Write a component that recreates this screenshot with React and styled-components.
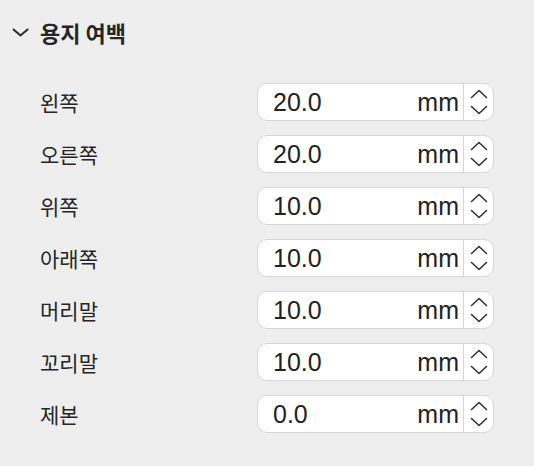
import React from "react";
import styled, { createGlobalStyle } from "styled-components";

const margins = [
  { label: "왼쪽", value: "20.0" },
  { label: "오른쪽", value: "20.0" },
  { label: "위쪽", value: "10.0" },
  { label: "아래쪽", value: "10.0" },
  { label: "머리말", value: "10.0" },
  { label: "꼬리말", value: "10.0" },
  { label: "제본", value: "0.0" },
];

const GlobalStyle = createGlobalStyle`
  html, body {
    margin: 0;
    background: #eeeeee;
  }
  body {
    font-family: "Noto Sans CJK KR", "Noto Sans", sans-serif;
    color: #222222;
  }
`;

const Chevron = ({ up }) => (
  <svg width="18" height="10" viewBox="0 0 18 10" fill="none">
    <path
      d={up ? "M1.5 8.5 L9 1.5 L16.5 8.5" : "M1.5 1.5 L9 8.5 L16.5 1.5"}
      stroke="#333"
      strokeWidth="1.6"
      strokeLinecap="round"
      strokeLinejoin="round"
    />
  </svg>
);

const App = () => {
  return (
    <Panel>
      <GlobalStyle />
      <Header>
        <svg width="17" height="9" viewBox="0 0 17 9" fill="none">
          <path
            d="M1.5 1.5 L8.5 7.5 L15.5 1.5"
            stroke="#2a2a2a"
            strokeWidth="2"
            strokeLinecap="round"
            strokeLinejoin="round"
          />
        </svg>
        <Title>용지 여백</Title>
      </Header>
      <Rows>
        {margins.map((m) => (
          <Row key={m.label}>
            <Label>{m.label}</Label>
            <Field>
              <Value>{m.value}</Value>
              <Unit>mm</Unit>
              <Stepper>
                <Chevron up />
                <Chevron />
              </Stepper>
            </Field>
          </Row>
        ))}
      </Rows>
    </Panel>
  );
};

const Panel = styled.div`
  width: 534px;
  height: 466px;
  box-sizing: border-box;
  padding: 19px 0 0 0;
`;

const Header = styled.div`
  display: flex;
  align-items: center;
  gap: 11px;
  padding-left: 12px;
  height: 26px;
`;

const Title = styled.div`
  font-size: 22px;
  font-weight: 700;
  color: #262626;
  line-height: 26px;
`;

const Rows = styled.div`
  display: flex;
  flex-direction: column;
  gap: 14px;
  margin-top: 38px;
  padding-left: 40px;
`;

const Row = styled.div`
  display: grid;
  grid-template-columns: 217px 237px;
  align-items: center;
  height: 38px;
`;

const Label = styled.div`
  font-size: 21px;
  color: #262626;
`;

const Field = styled.div`
  display: flex;
  align-items: center;
  box-sizing: border-box;
  height: 38px;
  background: #ffffff;
  border: 1px solid #d6d6d6;
  border-radius: 10px;
  font-family: "Liberation Sans", Arial, sans-serif;
  color: #222222;
`;

const Value = styled.div`
  flex: 1;
  padding-left: 15px;
  font-size: 25px;
`;

const Unit = styled.div`
  font-size: 25px;
  padding-right: 4px;
`;

const Stepper = styled.div`
  display: flex;
  flex-direction: column;
  align-items: center;
  justify-content: center;
  gap: 6px;
  width: 29px;
  height: 100%;
  border-left: 1px solid #d6d6d6;
`;

export default App;
